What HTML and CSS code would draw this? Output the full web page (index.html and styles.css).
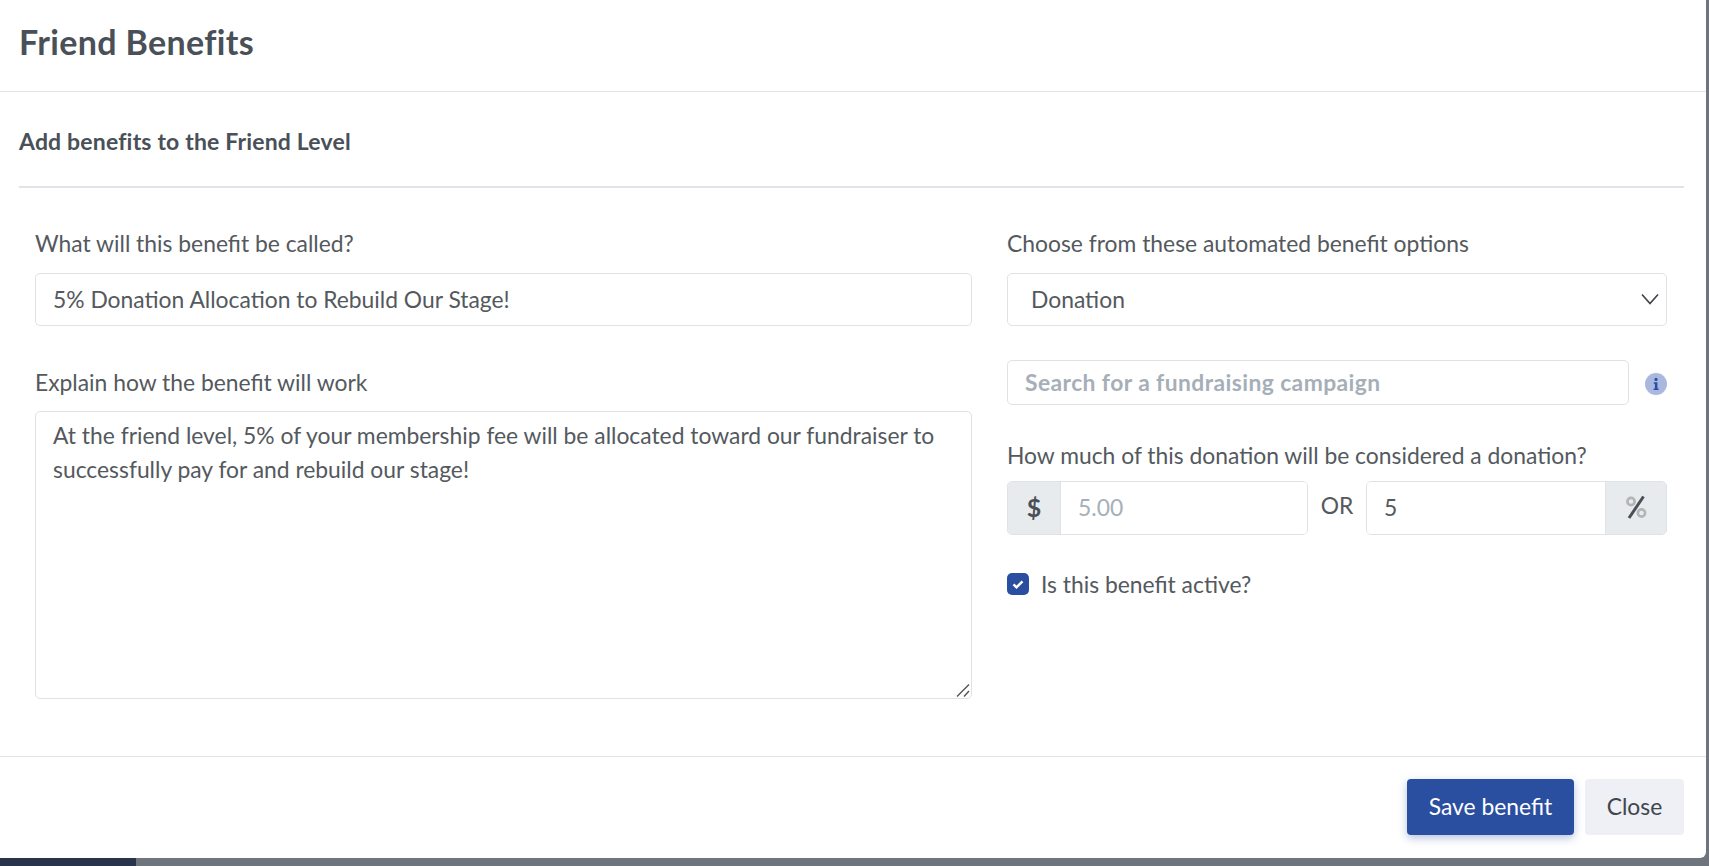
FILE: index.html
```html
<!DOCTYPE html>
<html lang="en">
<head>
<meta charset="utf-8">
<title>Friend Benefits</title>
<link rel="stylesheet" href="styles.css">
</head>
<body>
<div class="backdrop-strip"></div>
<main class="modal">
  <header class="modal-header"><h1>Friend Benefits</h1></header>
  <section class="modal-body">
    <h2>Add benefits to the Friend Level</h2>
    <div class="columns">
      <div class="col-left">
        <label class="label">What will this benefit be called?</label>
        <input class="control name-input" type="text" value="5% Donation Allocation to Rebuild Our Stage!">
        <label class="label explain-label">Explain how the benefit will work</label>
        <div class="explain-wrap">
          <textarea class="control explain">At the friend level, 5% of your membership fee will be allocated toward our fundraiser to successfully pay for and rebuild our stage!</textarea>
          <svg class="grip" viewBox="0 0 14 14" width="14" height="14" aria-hidden="true"><path d="M1 13.5L13 1.5M8 13.5l5-5.5" fill="none" stroke="#555" stroke-width="1.4"/></svg>
        </div>
      </div>
      <div class="col-right">
        <label class="label">Choose from these automated benefit options</label>
        <div class="select-wrap">
          <select class="control type-select"><option>Donation</option></select>
          <svg class="chevron" viewBox="0 0 18 12" width="18" height="12" aria-hidden="true"><path d="M1 1.5l8 9 8-9" fill="none" stroke="#3d4248" stroke-width="1.6"/></svg>
        </div>
        <div class="search-row">
          <input class="control search" type="text" placeholder="Search for a fundraising campaign">
          <svg class="info" viewBox="0 0 22 22" width="22" height="22" aria-hidden="true">
            <circle cx="11" cy="11" r="11" fill="#a9b8de"/>
            <circle cx="11" cy="6.4" r="1.6" fill="#2a4ea0"/>
            <path d="M8.8 9.2h3.6v6.2h1.2v1.6H8.6v-1.6h1.3v-4.6H8.8z" fill="#2a4ea0"/>
          </svg>
        </div>
        <label class="label amount-label">How much of this donation will be considered a donation?</label>
        <div class="amount-row">
          <div class="group group-dollar">
            <span class="addon addon-left">$</span>
            <input class="group-input" type="text" placeholder="5.00">
          </div>
          <span class="or">OR</span>
          <div class="group group-percent">
            <input class="group-input" type="text" value="5">
            <span class="addon addon-right">
              <svg viewBox="0 0 22 24" width="22" height="24" aria-hidden="true">
                <circle cx="6" cy="6.5" r="3.6" fill="none" stroke="#b2b4b6" stroke-width="2.6"/>
                <circle cx="16.5" cy="18" r="3.6" fill="none" stroke="#b2b4b6" stroke-width="2.6"/>
                <path d="M18.5 1.5L4 23" fill="none" stroke="#495057" stroke-width="3"/>
              </svg>
            </span>
          </div>
        </div>
        <div class="check-row">
          <span class="check">
            <svg viewBox="0 0 22 22" width="22" height="22" aria-hidden="true"><path d="M6.5 11.3l3 3 6-6" fill="none" stroke="#fff" stroke-width="2.4"/></svg>
          </span>
          <span class="check-label">Is this benefit active?</span>
        </div>
      </div>
    </div>
  </section>
  <footer class="modal-footer">
    <button class="btn btn-primary" type="button">Save benefit</button>
    <button class="btn btn-light" type="button">Close</button>
  </footer>
</main>
</body>
</html>
```
FILE: styles.css
```css
* { box-sizing: border-box; }
html, body { margin: 0; height: 100%; overflow: hidden; }
body {
  background: #6e757d;
  font-family: "Lato", "Noto Sans", sans-serif;
  color: #54595e;
  font-size: 22.85px;
  position: relative;
}
.backdrop-strip {
  position: absolute;
  left: 0;
  bottom: 0;
  width: 136px;
  height: 8px;
  background: #28344a;
}
.modal {
  position: relative;
  width: 1706px;
  height: 858px;
  background: #fff;
  border-bottom-right-radius: 6px;
  display: flex;
  flex-direction: column;
}
.modal-header {
  height: 92px;
  padding: 0 19px;
  border-bottom: 1px solid #e2e4e8;
  display: flex;
  align-items: center;
}
.modal-header h1 {
  margin: -8px 0 0;
  font-size: 34px;
  letter-spacing: .35px;
  font-weight: 700;
  color: #495057;
}
.modal-body {
  flex: 1;
  padding: 0 22px 0 19px;
}
.modal-body h2 {
  margin: 0;
  height: 96px;
  padding-top: 33px;
  font-size: 23px;
  letter-spacing: .17px;
  line-height: 32px;
  font-weight: 700;
  color: #495057;
  border-bottom: 2px solid #e1e3e9;
}
.columns {
  display: flex;
  gap: 35px;
  padding: 0 17px 0 16px;
}
.col-left { width: 937px; }
.col-right { width: 660px; }
.label {
  display: block;
  height: 86px;
  padding-top: 39px;
  line-height: 32px;
  margin-bottom: -1px;
}
.control {
  display: block;
  width: 100%;
  height: 53px;
  border: 1px solid #dfe2e6;
  border-radius: 5px;
  background: #fff;
  font: inherit;
  color: #54595e;
  padding: 0 17px 2px;
  outline: none;
}
.explain-label { height: 86px; padding-top: 40px; }
.explain-wrap { position: relative; }
.explain {
  height: 288px;
  padding: 6px 17px;
  line-height: 34px;
  resize: none;
}
.grip { position: absolute; right: 2px; bottom: 2px; }
.select-wrap { position: relative; }
.type-select { padding: 0 23px 2px; appearance: none; }
.chevron { position: absolute; right: 8px; top: 20px; pointer-events: none; }
.search-row {
  display: flex;
  align-items: center;
  gap: 16px;
  margin-top: 34px;
}
.search {
  flex: 1;
  height: 45px;
  width: auto;
}
.search::placeholder, .group-input::placeholder { color: #a6afb8; opacity: 1; }
.search::placeholder { font-weight: 700; letter-spacing: .42px; }
.info { flex: none; margin-top: 2px; }
.amount-label { height: 77px; padding-top: 34px; }
.amount-row {
  display: flex;
  align-items: stretch;
  height: 54px;
}
.group {
  display: flex;
  border: 1px solid #dfe2e6;
  border-radius: 5px;
  overflow: hidden;
}
.group-dollar { width: 301px; }
.group-percent { width: 301px; }
.group-input {
  flex: 1;
  min-width: 0;
  border: 0;
  font: inherit;
  color: #54595e;
  padding: 0 17px 2px;
  outline: none;
}
.addon {
  flex: none;
  background: #e8ebee;
  color: #495057;
  display: flex;
  align-items: center;
  justify-content: center;
  font-size: 25px;
  font-weight: 700;
  padding-bottom: 3px;
}
.addon-left { width: 53px; border-right: 1px solid #dfe2e6; }
.addon-right { width: 61px; border-left: 1px solid #dfe2e6; }
.or {
  width: 58px;
  text-align: center;
  line-height: 48px;
}
.check-row {
  display: flex;
  align-items: center;
  gap: 12px;
  margin-top: 35px;
}
.check {
  width: 22px;
  height: 22px;
  border-radius: 5px;
  background: #2a4ea0;
  display: block;
}
.check svg { display: block; }
.modal-footer {
  height: 102px;
  border-top: 1px solid #e2e4e8;
  padding: 22px 22px 0 0;
  display: flex;
  justify-content: flex-end;
  align-items: flex-start;
  gap: 11px;
}
.btn {
  height: 56px;
  border: 0;
  border-radius: 4px;
  font: inherit;
  padding: 0 0 3px;
  cursor: pointer;
}
.btn-primary {
  width: 167px;
  background: #2a4ea0;
  color: #fff;
  box-shadow: 0 3px 8px rgba(42, 78, 160, .35);
}
.btn-light {
  width: 99px;
  background: #eef0f5;
  color: #41464d;
}
```
